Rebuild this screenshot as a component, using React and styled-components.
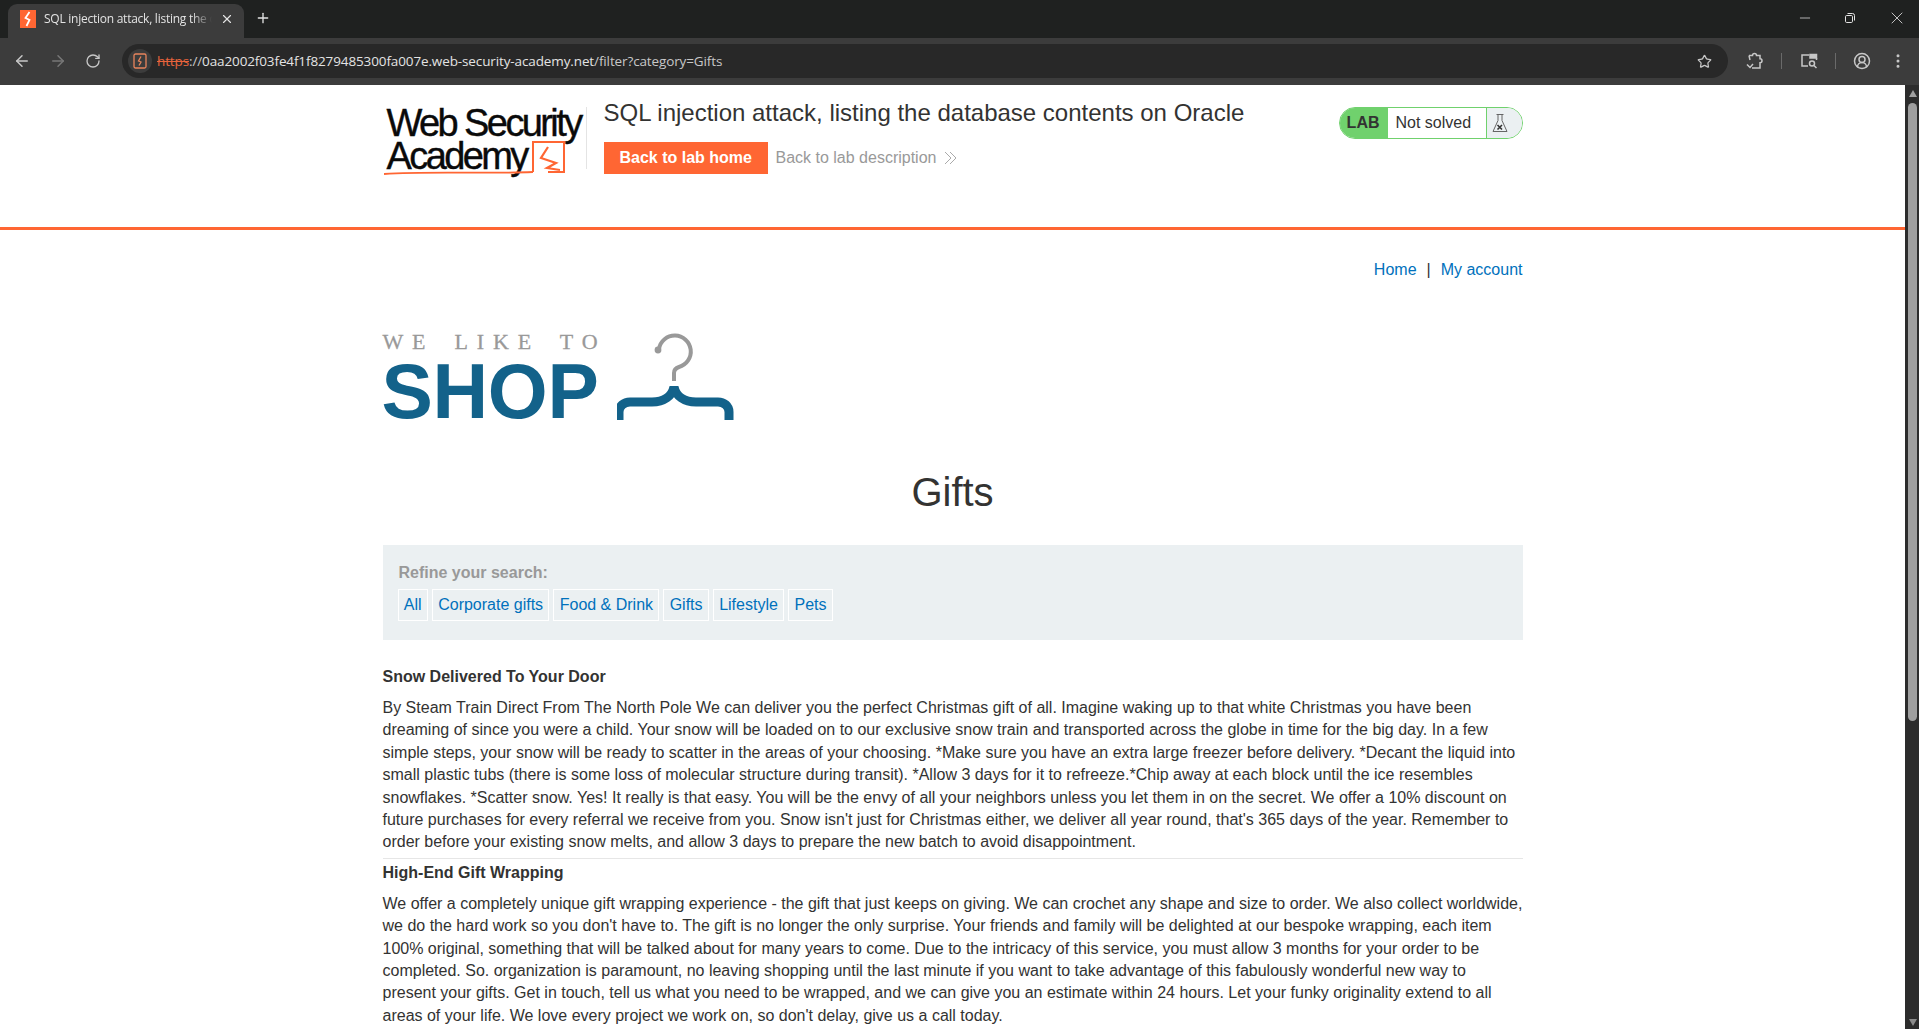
import React from "react";
import styled, { createGlobalStyle } from "styled-components";
import { ArrowLeft, ArrowRight, RotateCw, Star, CircleUserRound, EllipsisVertical, Plus, X, Minus } from "lucide-react";

const GlobalStyle = createGlobalStyle`
  html, body { margin: 0; height: 100%; overflow: hidden; background: #fff; }
  body { font-family: "Liberation Sans", Arial, sans-serif; font-size: 16px; color: #333332; }
`;

const Shell = styled.div`
  display: flex;
  flex-direction: column;
  height: 1029px;
  overflow: hidden;
`;

const TabStrip = styled.div`
  display: flex;
  align-items: flex-end;
  height: 38px;
  flex: none;
  background: #1f2120;
  color: #e3e3e3;
`;

const Tab = styled.div`
  display: flex;
  align-items: center;
  gap: 8px;
  width: 236px;
  height: 34px;
  margin-left: 8px;
  padding: 0 10px 5px 12px;
  box-sizing: border-box;
  background: #3c3c3c;
  border-radius: 9px 9px 0 0;
`;

const TabTitle = styled.span`
  flex: 1;
  overflow: hidden;
  white-space: nowrap;
  font-family: "Open Sans", sans-serif;
  font-size: 12px;
  letter-spacing: -0.25px;
  color: #e3e3e3;
  mask-image: linear-gradient(90deg, #000 88%, transparent);
`;

const NewTab = styled.div`
  display: flex;
  align-items: center;
  margin: 0 0 12px 11px;
`;

const WindowControls = styled.div`
  display: flex;
  gap: 31px;
  align-items: center;
  height: 20px;
  margin: 0 12px 10px auto;
  color: #e3e3e3;
`;

const Toolbar = styled.div`
  display: flex;
  align-items: center;
  height: 47px;
  flex: none;
  padding: 6px 12px 7px 13px;
  box-sizing: border-box;
  gap: 18px;
  background: #3c3c3c;
  color: #c7c7c7;
`;

const AddressBar = styled.div`
  display: flex;
  align-items: center;
  flex: 1;
  height: 34px;
  margin-left: 3px;
  padding: 0 16px 0 6px;
  background: #282828;
  border-radius: 17px;
`;

const SiteChip = styled.div`
  display: flex;
  align-items: center;
  justify-content: center;
  width: 24px;
  height: 24px;
  margin-right: 5px;
  background: #3c3c3c;
  border-radius: 12px;
`;

const Url = styled.span`
  flex: 1;
  font-family: "Open Sans", sans-serif;
  font-size: 13.5px;
  letter-spacing: -0.12px;
  color: #c7c7c7;
  b { font-weight: 400; color: #e8643c; text-decoration: line-through; }
  em { font-style: normal; color: #e3e3e3; }
`;

const ToolSep = styled.span`
  width: 1px;
  height: 16px;
  margin: 0 -0.75px;
  background: #6a6a6a;
`;

const Viewport = styled.div`
  display: flex;
  flex: 1;
  min-height: 0;
`;

const Page = styled.main`
  flex: 1;
  min-width: 0;
  overflow: hidden;
`;

const Scrollbar = styled.div`
  display: flex;
  flex-direction: column;
  align-items: center;
  width: 14px;
  flex: none;
  padding-left: 1px;
  box-sizing: border-box;
  background: #2c2c2c;
`;

const ScrollArrow = styled.div`
  width: 0;
  height: 0;
  border-left: 4.5px solid transparent;
  border-right: 4.5px solid transparent;
  ${(props) =>
    props.$down
      ? "margin: auto 0 3px; border-top: 7px solid #8c8c8c;"
      : "margin: 5px 0 6px; border-bottom: 7px solid #a0a0a0;"}
`;

const ScrollThumb = styled.div`
  width: 9px;
  height: 618px;
  border-radius: 5px;
  background: #9f9f9f;
`;

const LabBanner = styled.header`
  height: 145px;
  box-sizing: border-box;
  border-bottom: 3px solid #ff6633;
`;

const Container = styled.div`
  width: 1140px;
  margin: 0 auto;
`;

const BannerRow = styled(Container)`
  display: flex;
  padding-top: 15px;
`;

const Logo = styled.div`
  position: relative;
  width: 204px;
  height: 75px;
  flex: none;
  margin-right: 17px;
  padding-top: 7px;
  box-sizing: border-box;

  &::after {
    content: "";
    position: absolute;
    right: 0;
    top: 7px;
    width: 1px;
    height: 62px;
    background: #e4e4e4;
  }
`;

const LogoText = styled.div`
  font-size: 38px;
  line-height: 33px;
  letter-spacing: -2.6px;
  color: #0a0a0a;
  -webkit-text-stroke: 0.4px #0a0a0a;
  white-space: nowrap;
  padding-left: 4px;
`;

const LogoMark = styled.svg`
  position: absolute;
  left: -2px;
  top: 36px;
`;

const BannerMain = styled.div`
  flex: 1;
`;

const LabTitle = styled.h2`
  margin: -1px 0 15px;
  font-size: 24px;
  font-weight: 400;
  line-height: 28px;
  color: #333332;
`;

const BannerActions = styled.div`
  display: flex;
  align-items: center;
  gap: 7.5px;
`;

const HomeButton = styled.a`
  padding: 0 16px;
  line-height: 32px;
  font-size: 16px;
  font-weight: 700;
  color: #fff;
  background: #ff6633;
`;

const DescLink = styled.a`
  display: flex;
  align-items: center;
  gap: 8px;
  color: #999;
`;

const LabStatus = styled.div`
  display: flex;
  align-items: stretch;
  height: 32px;
  margin-top: 7px;
  box-sizing: border-box;
  border: 1px solid #70d16d;
  border-radius: 16px;
  overflow: hidden;
`;

const StatusLabel = styled.span`
  display: flex;
  align-items: center;
  padding: 0 8px 0 7px;
  font-weight: 700;
  background: #70d16d;
`;

const StatusText = styled.span`
  display: flex;
  align-items: center;
  width: 98px;
  padding-left: 8px;
  box-sizing: border-box;
`;

const StatusIcon = styled.span`
  display: flex;
  align-items: center;
  width: 36px;
  padding-left: 4px;
  box-sizing: border-box;
  background: #ebf0f2;
  border-left: 1px solid #70d16d;
`;

const TopNav = styled.nav`
  display: flex;
  justify-content: flex-end;
  gap: 10px;
  margin-top: 29px;
  line-height: 22px;
`;

const Link = styled.a`
  color: #0071bc;
`;

const ShopLogo = styled.div`
  display: flow-root;
  position: relative;
  width: 360px;
  height: 94px;
  margin-top: 50px;
`;

const ShopTag = styled.div`
  margin: -2px 0 2px;
  font-family: "Liberation Serif", serif;
  font-size: 22px;
  line-height: 25px;
  letter-spacing: 8.8px;
  word-spacing: 6px;
  color: #999;
  -webkit-text-stroke: 0.3px #999;
`;

const ShopWord = styled.div`
  font-size: 77px;
  font-weight: 700;
  line-height: 70px;
  letter-spacing: -0.3px;
  margin-left: -1px;
  color: #13628a;
`;

const Hanger = styled.svg`
  position: absolute;
  left: 234px;
  top: -3px;
`;

const PageTitle = styled.h1`
  margin: 43px 0 0;
  font-size: 40px;
  font-weight: 400;
  line-height: 48px;
  text-align: center;
`;

const Filters = styled.section`
  height: 95px;
  margin-top: 29px;
  padding: 17px 15px 0;
  box-sizing: border-box;
  background: #ebf0f2;
`;

const FilterTitle = styled.div`
  padding-left: 1px;
  font-weight: 700;
  line-height: 22px;
  color: #999;
`;

const FilterList = styled.div`
  display: flex;
  gap: 4px;
  margin-top: 5px;
`;

const FilterLink = styled.a`
  padding: 0 5.3px;
  border: 1px solid #fff;
  line-height: 30px;
  color: #0071bc;
`;

const Posts = styled.div`
  margin-top: 26px;
`;

const Post = styled.article`
  padding-bottom: 4px;
  border-bottom: ${(props) => (props.$last ? "0" : "1px solid #e6e6e6")};
  & + & { margin-top: 3px; }
`;

const PostTitle = styled.h3`
  margin: 0;
  font-size: 16px;
  line-height: 22px;
`;

const PostBody = styled.p`
  margin: 9px 0 0;
  font-size: 16px;
  line-height: 22.4px;
`;

const ExtensionIcon = () => (
  <svg width="18" height="18" viewBox="0 0 18 18" fill="none" stroke="#c7c7c7" strokeWidth="1.5">
    <path d="M3 3.5h3.5a2 2 0 0 1 4 0H14v3.2a2 2 0 0 1 0 4V16H6" />
    <path d="M3 3.5L4 8" />
    <path d="M1 12.5L4 15.5L7 12" />
  </svg>
);

const TabSearch = () => (
  <svg width="18" height="18" viewBox="0 0 18 18" fill="none" stroke="#c7c7c7" strokeWidth="1.5">
    <path d="M8 14H2V3h7" />
    <path d="M10 2.5h6.5v3.5h-6.5z" fill="#c7c7c7" />
    <path d="M16.5 6v2" />
    <circle cx="12" cy="11.5" r="2.5" />
    <path d="M14 13.5l2.5 2.5" />
  </svg>
);

const Restore = () => (
  <svg width="12" height="12" viewBox="0 0 12 12" fill="none" stroke="#e3e3e3" strokeWidth="1">
    <rect x="1.5" y="3.5" width="7" height="7" rx="1.2" />
    <path d="M3.5 1.5h5a2 2 0 0 1 2 2v5" />
  </svg>
);

const Flask = () => (
  <svg width="18" height="20" viewBox="0 0 18 20" fill="none" stroke="#666" strokeWidth="1">
    <path d="M5.5 1.5h7M7 1.5v6L2 18.5h14L11 7.5v-6" />
    <path d="M6.5 12l4.5 4.5M11 12l-4.5 4.5" strokeWidth="1.6" stroke="#333" />
  </svg>
);

const Chevrons = () => (
  <svg width="13" height="14" viewBox="0 0 13 14" fill="none" stroke="#aaa" strokeWidth="1">
    <path d="M1 1l6 6-6 6M6 1l6 6-6 6" />
  </svg>
);

export default function App() {
  return (
    <Shell>
      <GlobalStyle />
      <TabStrip>
        <Tab>
          <svg width="16" height="18" viewBox="0 0 16 18">
            <rect width="16" height="18" fill="#ff6633" />
            <path d="M9.5 2 L5.5 8 L9.5 10 L6.5 16" stroke="#fff" strokeWidth="1.8" fill="none" />
          </svg>
          <TabTitle>SQL injection attack, listing the database</TabTitle>
          <X size={14} />
        </Tab>
        <NewTab><Plus size={16} /></NewTab>
        <WindowControls>
          <Minus size={16} strokeWidth={1.4} color="#bbb" />
          <Restore />
          <X size={20} strokeWidth={1} />
        </WindowControls>
      </TabStrip>
      <Toolbar>
        <ArrowLeft size={18} />
        <ArrowRight size={18} color="#777" />
        <RotateCw size={16} />
        <AddressBar>
          <SiteChip>
            <svg width="14" height="16" viewBox="0 0 14 16" fill="none" stroke="#e8845c" strokeWidth="1.3">
              <rect x="1" y="1" width="12" height="14" rx="1.5" />
              <path d="M8 3.5L5.5 8 8 9 6 12.5" />
            </svg>
          </SiteChip>
          <Url><b>https</b>://<em>0aa2002f03fe4f1f8279485300fa007e.web-security-academy.net</em>/filter?category=Gifts</Url>
          <Star size={15} />
        </AddressBar>
        <ExtensionIcon />
        <ToolSep />
        <TabSearch />
        <ToolSep />
        <CircleUserRound size={18} />
        <EllipsisVertical size={18} />
      </Toolbar>
      <Viewport>
        <Page>
          <LabBanner>
            <BannerRow>
              <Logo>
                <LogoText>Web Security<br />Academy</LogoText>
                <LogoMark width="186" height="42" viewBox="0 0 186 42" fill="none" stroke="#ff6633">
                  <path d="M3 38 C50 35 100 38 152 36" strokeWidth="1.8" />
                  <path d="M152 36V6h31v30h-16" strokeWidth="2" />
                  <path d="M167 11l-7 11 15 5-9 5 13 2" strokeWidth="2.2" />
                </LogoMark>
              </Logo>
              <BannerMain>
                <LabTitle>SQL injection attack, listing the database contents on Oracle</LabTitle>
                <BannerActions>
                  <HomeButton>Back to lab home</HomeButton>
                  <DescLink>Back to lab description <Chevrons /></DescLink>
                </BannerActions>
              </BannerMain>
              <LabStatus>
                <StatusLabel>LAB</StatusLabel>
                <StatusText>Not solved</StatusText>
                <StatusIcon><Flask /></StatusIcon>
              </LabStatus>
            </BannerRow>
          </LabBanner>
          <Container>
            <TopNav>
              <Link>Home</Link>
              <span>|</span>
              <Link>My account</Link>
            </TopNav>
            <ShopLogo>
              <ShopTag>WE LIKE TO</ShopTag>
              <ShopWord>SHOP</ShopWord>
              <Hanger width="120" height="94" viewBox="0 0 120 94" fill="none">
                <path d="M42 22a6 6 0 0 1 0-1a16 16 0 1 1 20 18c-3 1-5 3-5 6v8" stroke="#999" strokeWidth="4" />
                <circle cx="41" cy="22" r="3.4" fill="#999" />
                <path d="M2 92V84c0-6 5-10 11-10h22c12 0 20-6 22-15c2 9 10 15 22 15h22c6 0 11 4 11 10v8" stroke="#13628a" strokeWidth="9" />
              </Hanger>
            </ShopLogo>
            <PageTitle>Gifts</PageTitle>
            <Filters>
              <FilterTitle>Refine your search:</FilterTitle>
              <FilterList>
                {["All", "Corporate gifts", "Food & Drink", "Gifts", "Lifestyle", "Pets"].map((name) => (
                  <FilterLink key={name}>{name}</FilterLink>
                ))}
              </FilterList>
            </Filters>
            <Posts>
              <Post>
                <PostTitle>Snow Delivered To Your Door</PostTitle>
                <PostBody>By Steam Train Direct From The North Pole We can deliver you the perfect Christmas gift of all. Imagine waking up to that white Christmas you have been dreaming of since you were a child. Your snow will be loaded on to our exclusive snow train and transported across the globe in time for the big day. In a few simple steps, your snow will be ready to scatter in the areas of your choosing. *Make sure you have an extra large freezer before delivery. *Decant the liquid into small plastic tubs (there is some loss of molecular structure during transit). *Allow 3 days for it to refreeze.*Chip away at each block until the ice resembles snowflakes. *Scatter snow. Yes! It really is that easy. You will be the envy of all your neighbors unless you let them in on the secret. We offer a 10% discount on future purchases for every referral we receive from you. Snow isn't just for Christmas either, we deliver all year round, that's 365 days of the year. Remember to order before your existing snow melts, and allow 3 days to prepare the new batch to avoid disappointment.</PostBody>
              </Post>
              <Post $last>
                <PostTitle>High-End Gift Wrapping</PostTitle>
                <PostBody>We offer a completely unique gift wrapping experience - the gift that just keeps on giving. We can crochet any shape and size to order. We also collect worldwide, we do the hard work so you don't have to. The gift is no longer the only surprise. Your friends and family will be delighted at our bespoke wrapping, each item 100% original, something that will be talked about for many years to come. Due to the intricacy of this service, you must allow 3 months for your order to be completed. So. organization is paramount, no leaving shopping until the last minute if you want to take advantage of this fabulously wonderful new way to present your gifts. Get in touch, tell us what you need to be wrapped, and we can give you an estimate within 24 hours. Let your funky originality extend to all areas of your life. We love every project we work on, so don't delay, give us a call today.</PostBody>
              </Post>
            </Posts>
          </Container>
        </Page>
        <Scrollbar>
          <ScrollArrow />
          <ScrollThumb />
          <ScrollArrow $down />
        </Scrollbar>
      </Viewport>
    </Shell>
  );
}
